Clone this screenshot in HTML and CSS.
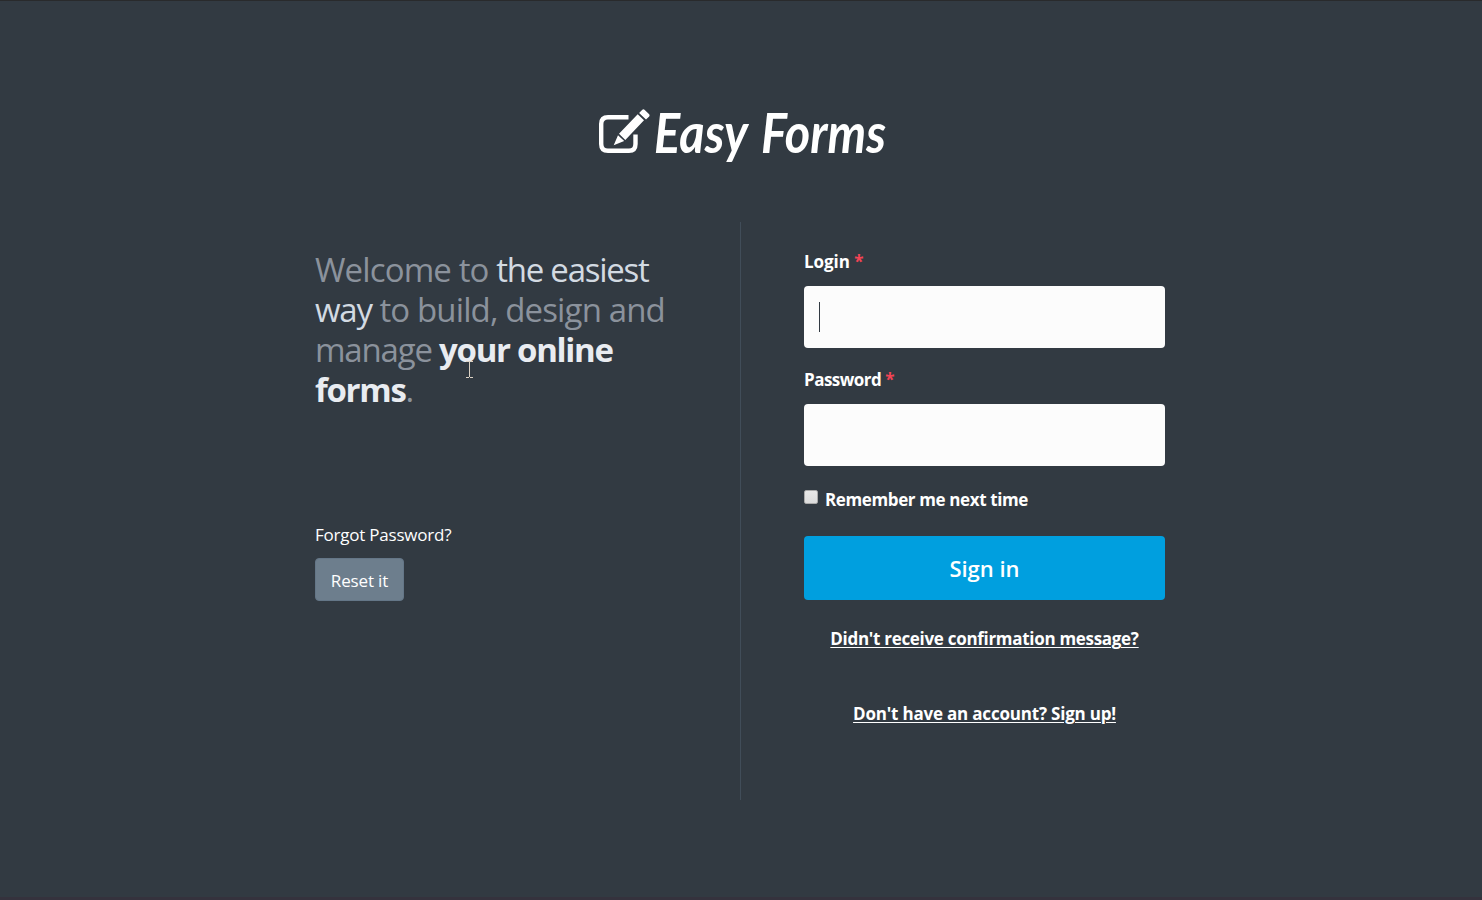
FILE: index.html
```html
<!DOCTYPE html>
<html lang="en">
<head>
<meta charset="utf-8">
<title>Easy Forms</title>
<link rel="stylesheet" href="styles.css">
</head>
<body>
<main class="page">
  <header class="brand">
    <svg class="logo" viewBox="0 0 300 80" role="img" aria-label="Easy Forms">
      <path class="logo-frame" d="M37.500 17.200H17Q10.200 17.200 10.200 24V44Q10.200 50.800 17 50.800H38Q44.500 50.800 44.500 44V34.500"/>
      <path class="logo-pencil" d="M22.700 45.200L27 35.200L33.200 41ZM28 33.700L46.700 14.300L53 20.300L34.300 39.900ZM48.100 13L51.300 9.700Q52.400 8.800 53.500 9.700L58.200 14.300Q59.100 15.400 58.200 16.400L55 19.500Z"/>
      <text class="logo-text" x="63" y="53" textLength="94" lengthAdjust="spacingAndGlyphs">Easy</text>
      <text class="logo-text" x="170" y="53" textLength="125" lengthAdjust="spacingAndGlyphs">Forms</text>
    </svg>
  </header>
  <div class="columns">
    <section class="intro">
      <h1 class="headline">Welcome to <span class="light">the easiest</span><br><span class="light">way</span> to build, design and<br><span class="tight">manage </span><b>your online</b><br><b>forms</b>.<svg class="cursor" viewBox="0 0 7 17"><path d="M0 .5H3M4 .5H7M3.500 1V16M0 16.500H3M4 16.500H7"/></svg></h1>
      <p class="forgot">Forgot Password?</p>
      <a class="reset">Reset it</a>
    </section>
    <form class="login">
      <label class="label label-login">Login <span class="req">*</span></label>
      <div class="field"><span class="caret"></span></div>
      <label class="label label-password">Password <span class="req">*</span></label>
      <div class="field"></div>
      <label class="remember"><span class="box"></span>Remember me next time</label>
      <button class="submit" type="button">Sign in</button>
      <a class="link link-confirm">Didn't receive confirmation message?</a>
      <a class="link link-signup">Don't have an account? Sign up!</a>
    </form>
  </div>
</main>
</body>
</html>
```
FILE: styles.css
```css
* { box-sizing: border-box; }
body { margin: 0; background: #323a42; font-family: "Open Sans", sans-serif; color: #fff; }
.page { height: 900px; padding-top: 100px; border-top: 1px solid #292a2c; border-bottom: 3px solid #35323d; overflow: hidden; }
.brand { height: 122px; margin-top: -1px; display: flex; justify-content: center; }
.logo { width: 300px; height: 80px; overflow: visible; }
.logo-frame { fill: none; stroke: #fff; stroke-width: 4.4; }
.logo-pencil { fill: #fff; }
.logo-text { font: italic 700 56px Lato, sans-serif; fill: #fff; }
.columns { display: flex; width: 850px; height: 578px; margin-left: 315px; }
.intro { width: 426px; border-right: 1px solid #414d59; padding-top: 28px; }
.headline { position: relative; margin: 0; font-size: 33px; line-height: 40px; font-weight: 400; color: #8b929c; white-space: nowrap; letter-spacing: -0.87px; }
.light { color: #d3dae2; letter-spacing: -1.25px; }
.tight { letter-spacing: -1.2px; }
.headline b { font-weight: 700; color: #e9ecf1; letter-spacing: -1.3px; }
.cursor { position: absolute; left: 151px; top: 111px; width: 7px; height: 17px; fill: none; stroke: #ddd3c5; stroke-width: 1; }
.forgot { margin: 112px 0 0; font-size: 17px; line-height: 26px; letter-spacing: -0.22px; }
.reset { display: inline-flex; align-items: center; justify-content: center; width: 89px; height: 43px; margin-top: 10px; padding-top: 2px; background: #6d7e8d; border: 1px solid #647687; border-radius: 4px; font-size: 17px; letter-spacing: -0.15px; }
.login { width: 361px; margin-left: 63px; padding-top: 27px; display: flex; flex-direction: column; }
.label { height: 26px; line-height: 26px; font-size: 17px; font-weight: 700; margin-bottom: 11px; }
.label-login { letter-spacing: -0.05px; }
.label-password { margin-top: 19px; letter-spacing: -0.52px; }
.req { color: #f44455; }
.field { height: 62px; flex: none; padding: 16px 15px; background: #fcfcfc; border-radius: 4px; }
.caret { display: block; width: 1px; height: 30px; background: #323a42; }
.remember { display: flex; height: 26px; margin-top: 21px; line-height: 26px; font-size: 17px; font-weight: 700; letter-spacing: -0.38px; }
.box { width: 14px; height: 14px; margin: 3px 7px 0 0; border: 1px solid #aaa; border-radius: 2px; background: linear-gradient(#e8e8e8, #dcdcdc); }
.submit { height: 64px; margin-top: 23px; padding: 0; border: 0; border-radius: 4px; background: #009fdf; color: #fff; font: 600 22px "Open Sans", sans-serif; letter-spacing: 0; }
.link { align-self: center; height: 26px; line-height: 26px; font-size: 17px; font-weight: 700; text-decoration: underline; text-decoration-thickness: 1px; text-underline-offset: 2px; white-space: nowrap; }
.link-confirm { margin-top: 26px; letter-spacing: -0.3px; }
.link-signup { margin-top: 49px; letter-spacing: -0.2px; }
```
